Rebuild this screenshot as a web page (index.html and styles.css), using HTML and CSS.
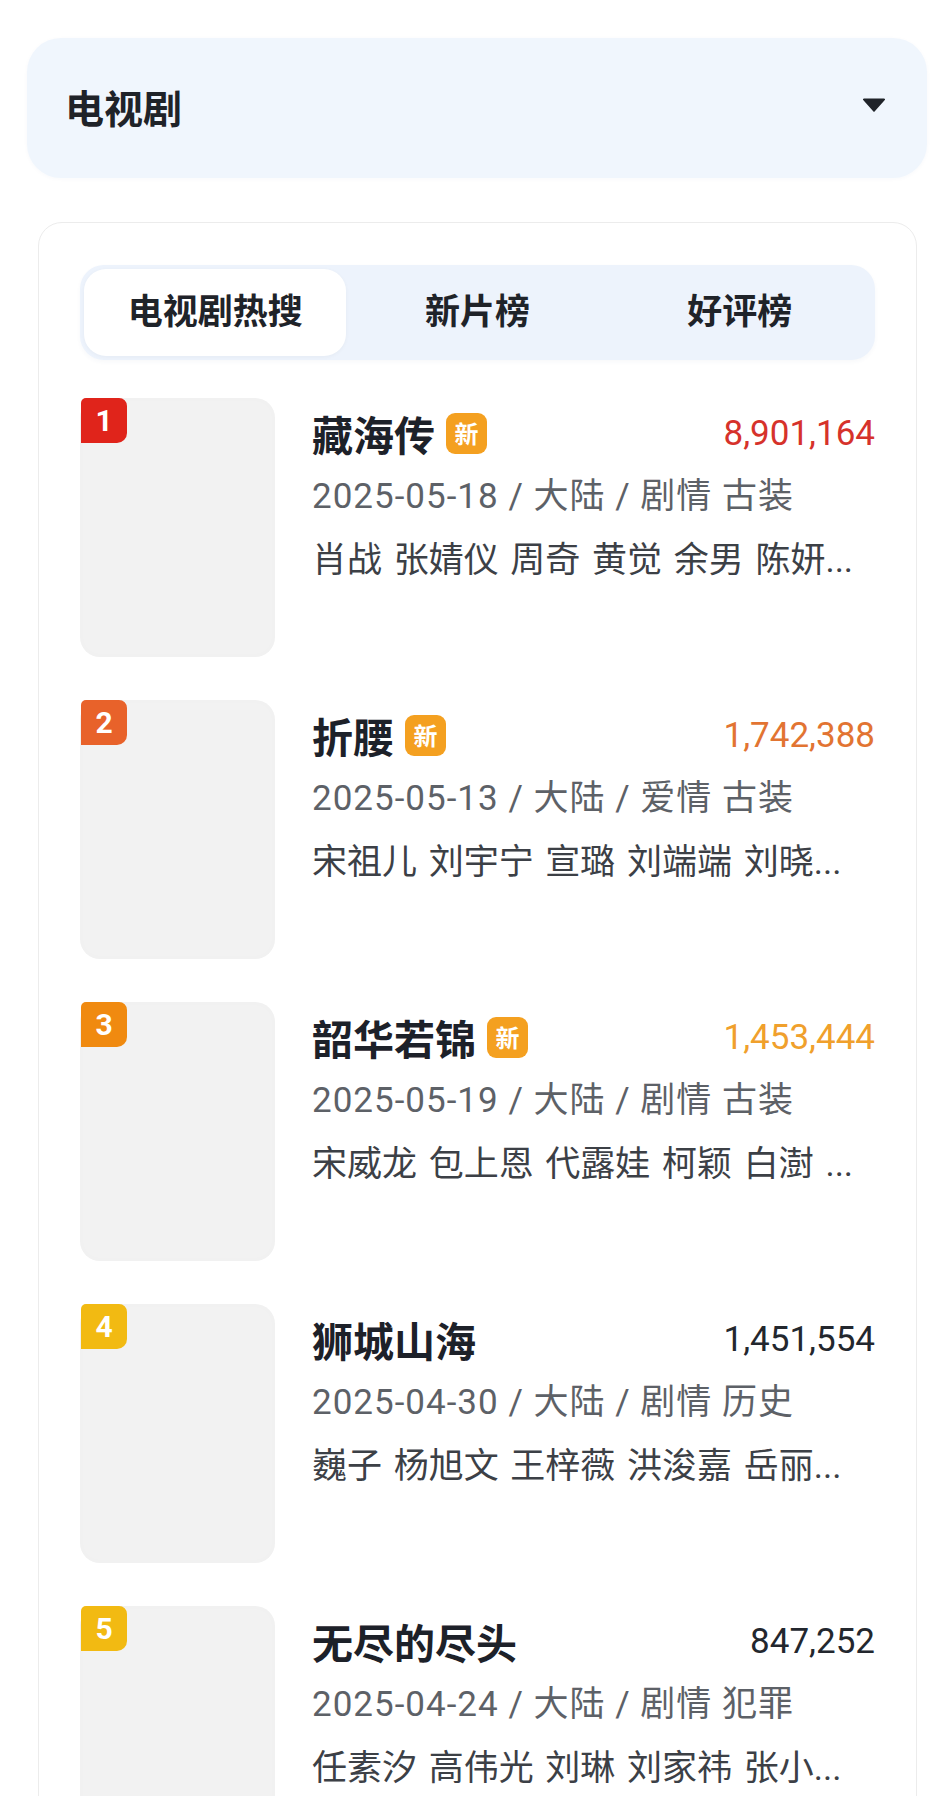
FILE: index.html
```html
<!DOCTYPE html>
<html lang="zh-CN">
<head>
<meta charset="utf-8">
<title>电视剧</title>
<link rel="stylesheet" href="styles.css">
</head>
<body>
<div class="page">
  <div class="dropdown">
    <span class="dropdown-label">电视剧</span>
    <svg class="caret" width="22" height="14" viewBox="0 0 22 14"><path d="M1 0.5H21a1 1 0 0 1 0.8 1.6L11.8 13.2a1 1 0 0 1-1.6 0L0.2 2.1A1 1 0 0 1 1 0.5Z" fill="#1f2329"/></svg>
  </div>

  <div class="card">
    <div class="tabs">
      <div class="tab active">电视剧热搜</div>
      <div class="tab">新片榜</div>
      <div class="tab">好评榜</div>
    </div>

    <div class="list">
      <div class="item">
        <div class="thumb"><span class="rank r1">1</span></div>
        <div class="info">
          <div class="title-row">
            <div class="title">藏海传<span class="new">新</span></div>
            <div class="heat h1">8,901,164</div>
          </div>
          <div class="meta">2025-05-18 / 大陆 / 剧情 古装</div>
          <div class="actors">肖战 张婧仪 周奇 黄觉 余男 陈妍...</div>
        </div>
      </div>

      <div class="item">
        <div class="thumb"><span class="rank r2">2</span></div>
        <div class="info">
          <div class="title-row">
            <div class="title">折腰<span class="new">新</span></div>
            <div class="heat h2">1,742,388</div>
          </div>
          <div class="meta">2025-05-13 / 大陆 / 爱情 古装</div>
          <div class="actors">宋祖儿 刘宇宁 宣璐 刘端端 刘晓...</div>
        </div>
      </div>

      <div class="item">
        <div class="thumb"><span class="rank r3">3</span></div>
        <div class="info">
          <div class="title-row">
            <div class="title">韶华若锦<span class="new">新</span></div>
            <div class="heat h3">1,453,444</div>
          </div>
          <div class="meta">2025-05-19 / 大陆 / 剧情 古装</div>
          <div class="actors">宋威龙 包上恩 代露娃 柯颖 白澍 ...</div>
        </div>
      </div>

      <div class="item">
        <div class="thumb"><span class="rank r4">4</span></div>
        <div class="info">
          <div class="title-row">
            <div class="title">狮城山海</div>
            <div class="heat">1,451,554</div>
          </div>
          <div class="meta">2025-04-30 / 大陆 / 剧情 历史</div>
          <div class="actors">巍子 杨旭文 王梓薇 洪浚嘉 岳丽...</div>
        </div>
      </div>

      <div class="item">
        <div class="thumb"><span class="rank r4">5</span></div>
        <div class="info">
          <div class="title-row">
            <div class="title">无尽的尽头</div>
            <div class="heat">847,252</div>
          </div>
          <div class="meta">2025-04-24 / 大陆 / 剧情 犯罪</div>
          <div class="actors">任素汐 高伟光 刘琳 刘家祎 张小...</div>
        </div>
      </div>
    </div>
  </div>
</div>
</body>
</html>
```

FILE: styles.css
```css
* { box-sizing: border-box; }

html, body {
  margin: 0;
  padding: 0;
  background: #ffffff;
}

body {
  font-family: "Roboto", "Noto Sans CJK SC", sans-serif;
  color: #1f2329;
}

.page {
  padding-top: 38px;
}

.dropdown {
  margin-left: 27px;
  width: 900px;
  height: 140px;
  border-radius: 34px;
  background: #f0f6fd;
  display: flex;
  align-items: center;
  justify-content: space-between;
  padding: 0 42px 0 38px;
  box-shadow: 0 1px 4px rgba(30, 60, 120, 0.03);
}

.dropdown-label {
  font-family: "Noto Sans CJK SC", sans-serif;
  font-size: 39px;
  font-weight: 700;
  color: #1f2329;
  line-height: 1;
  margin-top: -3px;
}

.caret {
  display: block;
  margin-top: -6px;
}

.card {
  margin: 44px 34px 0 38px;
  border: 1px solid #ececec;
  border-radius: 24px;
  padding: 42px 41px 40px 41px;
  background: #ffffff;
}

.tabs {
  display: grid;
  grid-template-columns: repeat(3, 1fr);
  height: 95px;
  padding: 4px;
  background: #edf3fc;
  border-radius: 24px;
  box-shadow: 0 2px 4px rgba(40, 70, 120, 0.04);
}

.tab {
  display: flex;
  align-items: center;
  justify-content: center;
  font-family: "Noto Sans CJK SC", sans-serif;
  font-size: 35px;
  font-weight: 700;
  color: #1f2329;
  border-radius: 22px;
  padding-bottom: 8px;
}

.tab.active {
  background: #ffffff;
  box-shadow: 0 1px 4px rgba(0, 0, 0, 0.04);
}

.list {
  margin-top: 38px;
  display: flex;
  flex-direction: column;
  gap: 43px;
}

.item {
  display: flex;
  gap: 37px;
  height: 259px;
}

.thumb {
  position: relative;
  flex: 0 0 195px;
  height: 259px;
  border-radius: 20px;
  background: #f2f2f2;
  box-shadow: inset 0 0 8px rgba(0, 0, 0, 0.015);
}

.rank {
  position: absolute;
  left: 1px;
  top: 0;
  width: 46px;
  height: 45px;
  border-radius: 5px 8px 10px 0;
  color: #ffffff;
  font-family: "Roboto", sans-serif;
  font-size: 30px;
  font-weight: 700;
  display: flex;
  align-items: center;
  justify-content: center;
}

.r1 { background: #e0241b; }
.r2 { background: #e8622a; }
.r3 { background: #f08a10; }
.r4 { background: #f2ba12; }

.info {
  flex: 1;
  min-width: 0;
  padding-top: 3px;
}

.title-row {
  display: flex;
  align-items: center;
  justify-content: space-between;
  height: 64px;
}

.title {
  display: flex;
  align-items: center;
  font-family: "Noto Sans CJK SC", sans-serif;
  font-size: 41px;
  font-weight: 700;
  color: #1d2129;
  line-height: 1;
}

.new {
  margin-left: 11px;
  width: 41px;
  height: 41px;
  border-radius: 9px;
  background: #f4a020;
  color: #ffffff;
  font-size: 24px;
  font-weight: 700;
  display: inline-flex;
  align-items: center;
  justify-content: center;
}

.heat {
  font-family: "Roboto", sans-serif;
  font-size: 35px;
  font-weight: 400;
  color: #23272e;
}

.h1 { color: #d6322b; }
.h2 { color: #e27432; }
.h3 { color: #f0a02c; }

.meta,
.actors {
  height: 64px;
  line-height: 64px;
  font-size: 35px;
  white-space: nowrap;
  overflow: hidden;
  text-overflow: ellipsis;
}

.meta {
  color: #5d6167;
  letter-spacing: 1px;
}

.actors {
  color: #3c4046;
  word-spacing: 3px;
}
```
